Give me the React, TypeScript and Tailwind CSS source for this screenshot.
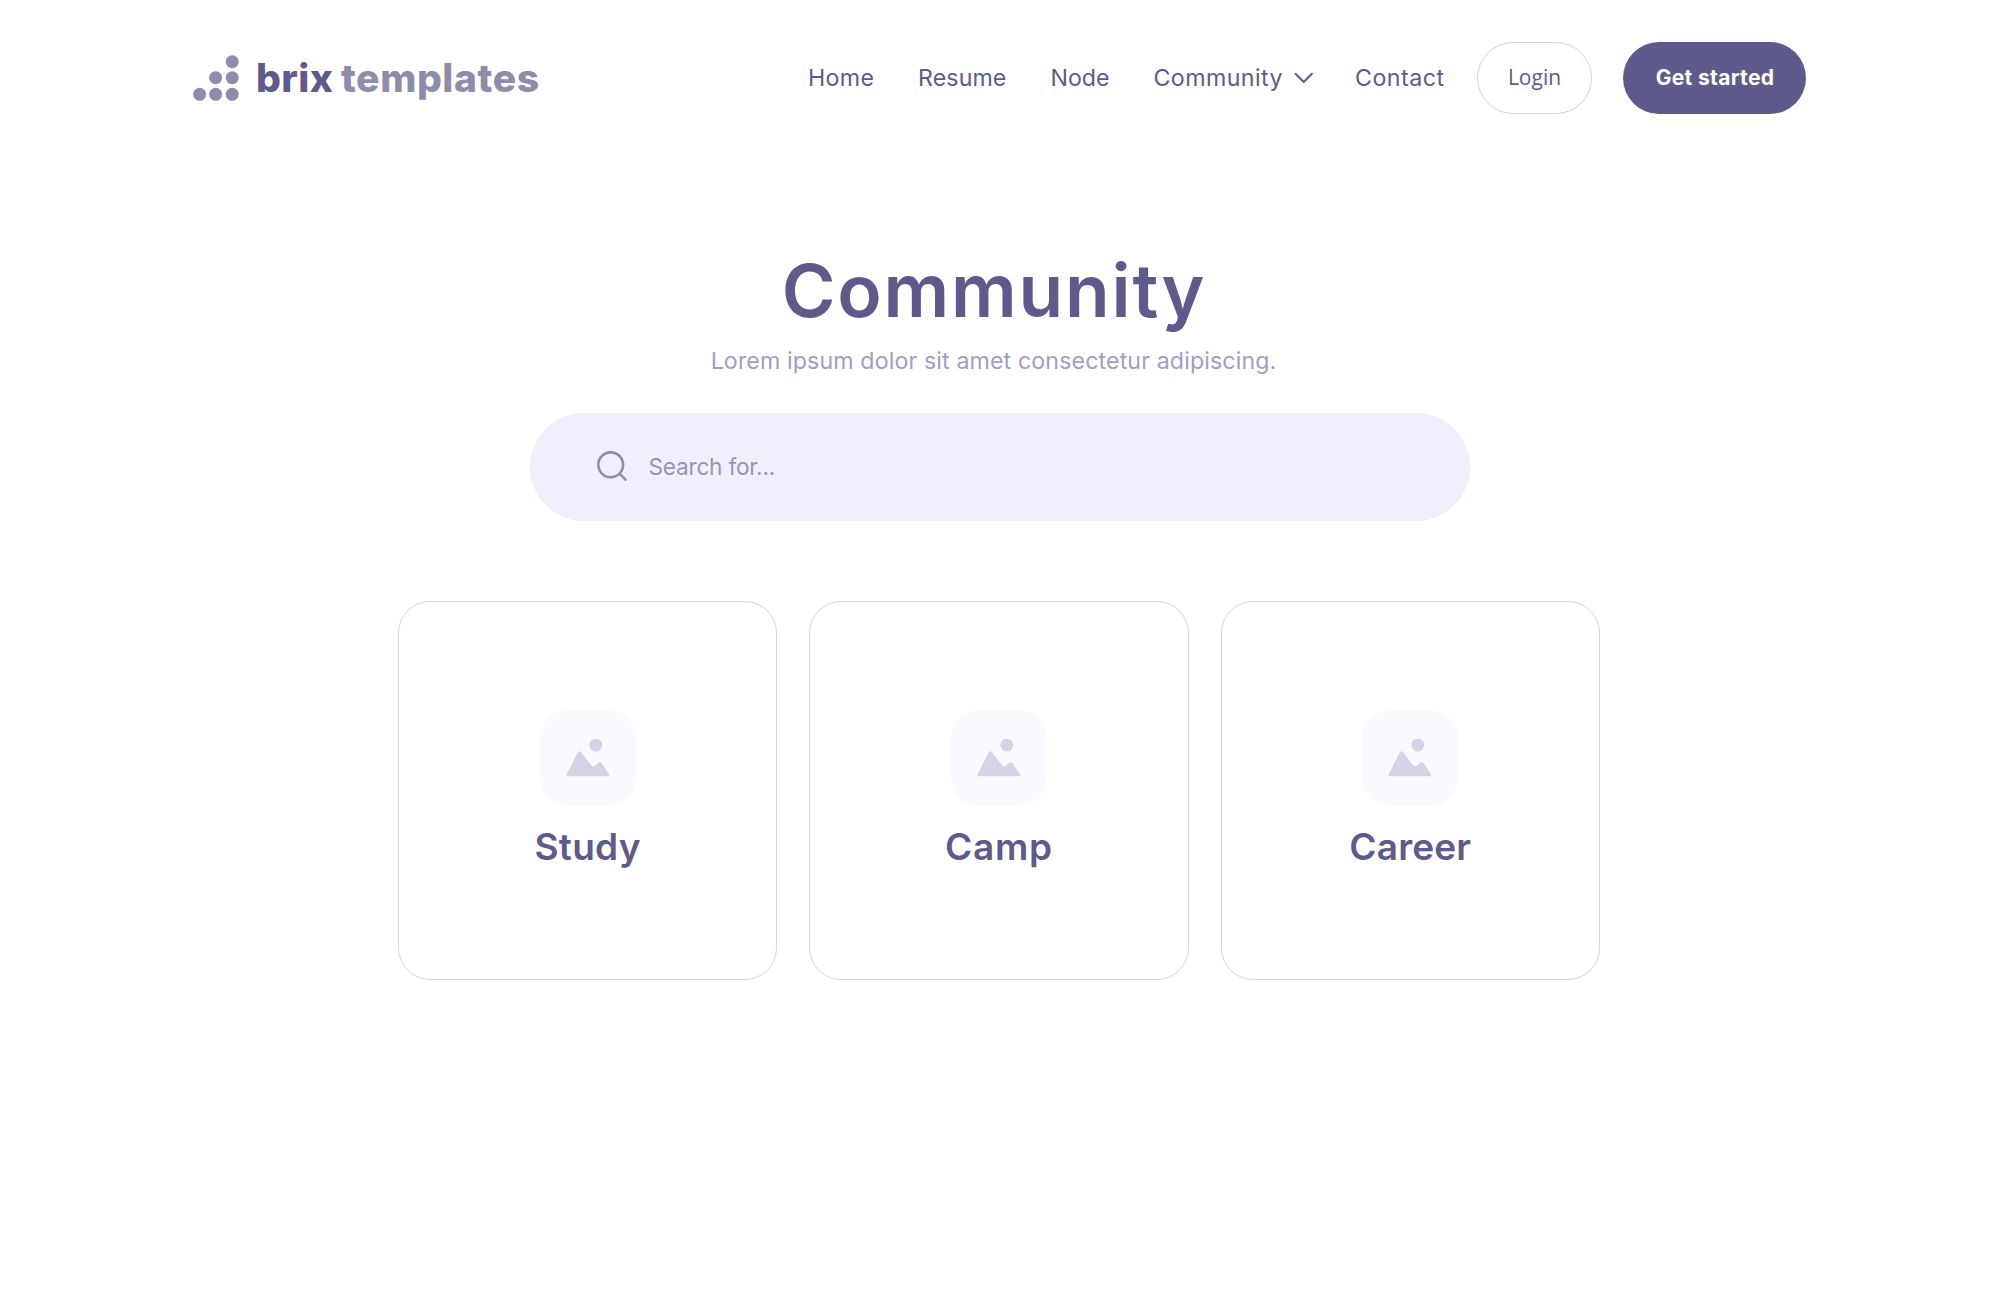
type NavItem = { label: string; box: string };

const navItems: NavItem[] = [
  { label: "Home", box: "w-[110px] tracking-[0.35px]" },
  { label: "Resume", box: "w-[132.5px] tracking-[0.1px]" },
  { label: "Node", box: "w-[103px] tracking-[0px]" },
];

const cards = [
  { label: "Study", tracking: "tracking-[0.3px]" },
  { label: "Camp", tracking: "tracking-[0.8px]" },
  { label: "Career", tracking: "tracking-[0.2px]" },
];

function LogoMark() {
  return (
    <svg width="48" height="48" viewBox="0 0 48 48" fill="#8F8BAB" className="shrink-0">
      <circle cx="39.2" cy="7.7" r="6.5" />
      <circle cx="22.6" cy="23.7" r="6.5" />
      <circle cx="39.2" cy="23.7" r="6.5" />
      <circle cx="6.6" cy="40.3" r="6.5" />
      <circle cx="22.6" cy="40.3" r="6.5" />
      <circle cx="39.2" cy="40.3" r="6.5" />
    </svg>
  );
}

function Chevron() {
  return (
    <svg width="20" height="12" viewBox="0 0 20 12" fill="none" className="shrink-0">
      <path d="M1.5 1.7 9.7 10 17.9 1.7" stroke="#5F5A8C" strokeWidth="2" strokeLinecap="round" strokeLinejoin="round" />
    </svg>
  );
}

function SearchIcon() {
  return (
    <svg width="32" height="32" viewBox="0 0 32 32" fill="none" className="shrink-0">
      <circle cx="14.7" cy="13.8" r="12.4" stroke="#8F8BAF" strokeWidth="2.6" />
      <path d="M23.7 22.7 29.6 28.6" stroke="#8F8BAF" strokeWidth="2.6" strokeLinecap="round" />
    </svg>
  );
}

function PictureTile() {
  return (
    <div className="flex size-24 items-center justify-center rounded-[28px] bg-[#FAF9FF]">
      <svg width="44" height="38" viewBox="0 0 44 38" fill="#D6D3E6">
        <circle cx="29.8" cy="6.1" r="6.4" />
        <path d="M11.6 20Q13.2 17.6 15 19.6L24.8 32.2Q26.8 34.6 29 32.8L32.4 30.2Q34.2 29 35.8 31L42.8 41.2Q43.8 43.4 41.6 43.7H2.2Q-0.1 43.4 0.9 41.2Z" transform="translate(0 -6.4)" />
      </svg>
    </div>
  );
}

export default function App() {
  return (
    <div className="min-h-[1299px] w-[1999px] bg-white font-['Inter',sans-serif] text-[#5F5A8C]">
      <header className="flex h-[156px] items-center pl-[193px]">
        <div className="flex h-12 w-[615px] items-center">
          <LogoMark />
          <div className="ml-[15px] flex items-baseline text-[39px] leading-12 font-extrabold">
            <span className="w-[85px] tracking-[0.4px]">brix</span>
            <span className="tracking-[0.6px] text-[#8F8BAB]">templates</span>
          </div>
        </div>
        <nav className="flex items-center text-[23.2px] leading-8">
          {navItems.map((item) => (
            <a key={item.label} className={item.box}>
              {item.label}
            </a>
          ))}
          <a className="flex w-[201.5px] items-center tracking-[0.42px]">
            <span className="w-[140px]">Community</span>
            <Chevron />
          </a>
          <a className="w-[122px] tracking-[0.5px]">Contact</a>
        </nav>
        <button className="flex h-[72px] w-[115px] items-center justify-center rounded-full border border-[#D2CEE4] pb-px font-['Open_Sans',sans-serif] text-[21px] tracking-[0px]">
          Login
        </button>
        <button className="ml-[31px] flex h-[72px] w-[183px] items-center justify-center rounded-full bg-[#5F5A8C] pl-px text-[21px] font-bold tracking-[0.35px] text-white">
          Get started
        </button>
      </header>

      <main>
        <section className="flex flex-col items-center">
          <h1 className="mt-[90px] w-[1988px] pr-[11px] text-center text-[73px] leading-[90px] font-semibold tracking-[1.8px]">
            Community
          </h1>
          <p className="mt-[9px] w-[1988px] pr-[12px] text-center text-[23.2px] leading-8 tracking-[0.12px] text-[#A29DC4]">
            Lorem ipsum dolor sit amet consectetur adipiscing.
          </p>
          <label className="mt-[35.5px] flex h-[108px] w-[940px] items-center rounded-full bg-[#F1EFFB] pl-[66px]">
            <SearchIcon />
            <input
              placeholder="Search for..."
              className="ml-[21px] w-[600px] bg-transparent text-[22.7px] leading-8 tracking-[-0.25px] outline-none placeholder:text-[#9894B5]"
            />
          </label>
        </section>

        <section className="mt-[80px] flex gap-8 pl-[398px]">
          {cards.map((card) => (
            <article
              key={card.label}
              className="flex size-[379.3px] flex-col items-center rounded-[32px] border border-[#D6D3E8] pt-[108px]"
            >
              <PictureTile />
              <h2 className={"mt-[18px] text-[37px] leading-[45px] font-semibold " + card.tracking}>{card.label}</h2>
            </article>
          ))}
        </section>
      </main>
    </div>
  );
}
